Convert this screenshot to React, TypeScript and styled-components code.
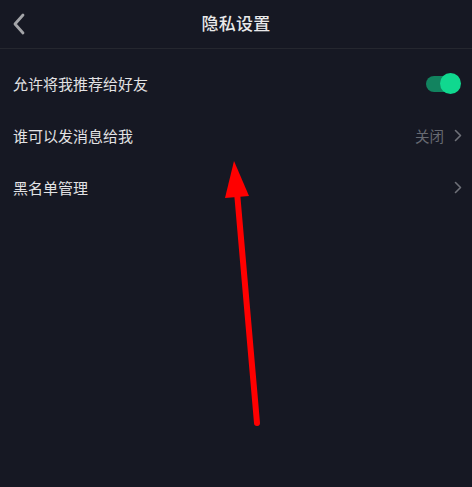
import styled, { createGlobalStyle } from 'styled-components';

const GlobalStyle = createGlobalStyle`
  html, body {
    margin: 0;
    padding: 0;
    background: #161823;
  }
  body {
    font-family: "Noto Sans CJK SC", "Noto Sans", sans-serif;
  }
`;

const Page = styled.div`
  position: relative;
  width: 472px;
  height: 487px;
  background: #161823;
  overflow: hidden;
`;

const Header = styled.div`
  height: 48px;
  display: flex;
  align-items: center;
  justify-content: center;
  position: relative;
  border-bottom: 1px solid #25272f;
`;

const BackButton = styled.div`
  position: absolute;
  left: 12px;
  top: 13px;
  width: 16px;
  height: 22px;
  display: flex;
  align-items: center;
`;

const Title = styled.div`
  font-size: 17px;
  font-weight: 500;
  color: #e9e9ea;
  letter-spacing: 0.3px;
  padding-bottom: 4px;
`;

const List = styled.div`
  display: flex;
  flex-direction: column;
  padding-top: 8px;
`;

const Row = styled.div`
  height: 52px;
  display: flex;
  align-items: center;
  justify-content: space-between;
  padding: 0 10px 0 13px;
`;

const Label = styled.div`
  font-size: 15px;
  color: #e2e2e4;
`;

const Right = styled.div`
  display: flex;
  align-items: center;
  gap: 10px;
`;

const Value = styled.span`
  font-size: 14.5px;
  color: #676a72;
`;

const Track = styled.div`
  position: relative;
  width: 30px;
  height: 16px;
  border-radius: 8px;
  background: #12835f;
`;

const Knob = styled.div`
  position: absolute;
  right: -5px;
  top: -3px;
  width: 21px;
  height: 21px;
  border-radius: 50%;
  background: #10d88f;
`;

const ToggleWrap = styled.div`
  padding-right: 6px;
  padding-top: 1px;
`;

const Annotation = styled.svg`
  position: absolute;
  left: 0;
  top: 0;
  pointer-events: none;
`;

const Chevron = () => (
  <svg width="8" height="13" viewBox="0 0 8 13">
    <path d="M1.5 1.5 L6.5 6.5 L1.5 11.5" fill="none" stroke="#6e7078" strokeWidth="1.6" strokeLinecap="round" strokeLinejoin="round" />
  </svg>
);

export default function App() {
  return (
    <>
      <GlobalStyle />
      <Page>
        <Header>
          <BackButton>
            <svg width="14" height="22" viewBox="0 0 14 22">
              <path d="M11 2 L3 11 L11 20" fill="none" stroke="#a3a4a8" strokeWidth="2.8" strokeLinecap="round" strokeLinejoin="round" />
            </svg>
          </BackButton>
          <Title>隐私设置</Title>
        </Header>
        <List>
          <Row>
            <Label>允许将我推荐给好友</Label>
            <ToggleWrap>
              <Track>
                <Knob />
              </Track>
            </ToggleWrap>
          </Row>
          <Row>
            <Label>谁可以发消息给我</Label>
            <Right>
              <Value>关闭</Value>
              <Chevron />
            </Right>
          </Row>
          <Row>
            <Label>黑名单管理</Label>
            <Right>
              <Chevron />
            </Right>
          </Row>
        </List>
        <Annotation width="472" height="487" viewBox="0 0 472 487">
          <line x1="257" y1="423" x2="237" y2="192" stroke="#ff0000" strokeWidth="6" strokeLinecap="round" />
          <polygon points="234,161 225,198 249,196" fill="#ff0000" />
        </Annotation>
      </Page>
    </>
  );
}
